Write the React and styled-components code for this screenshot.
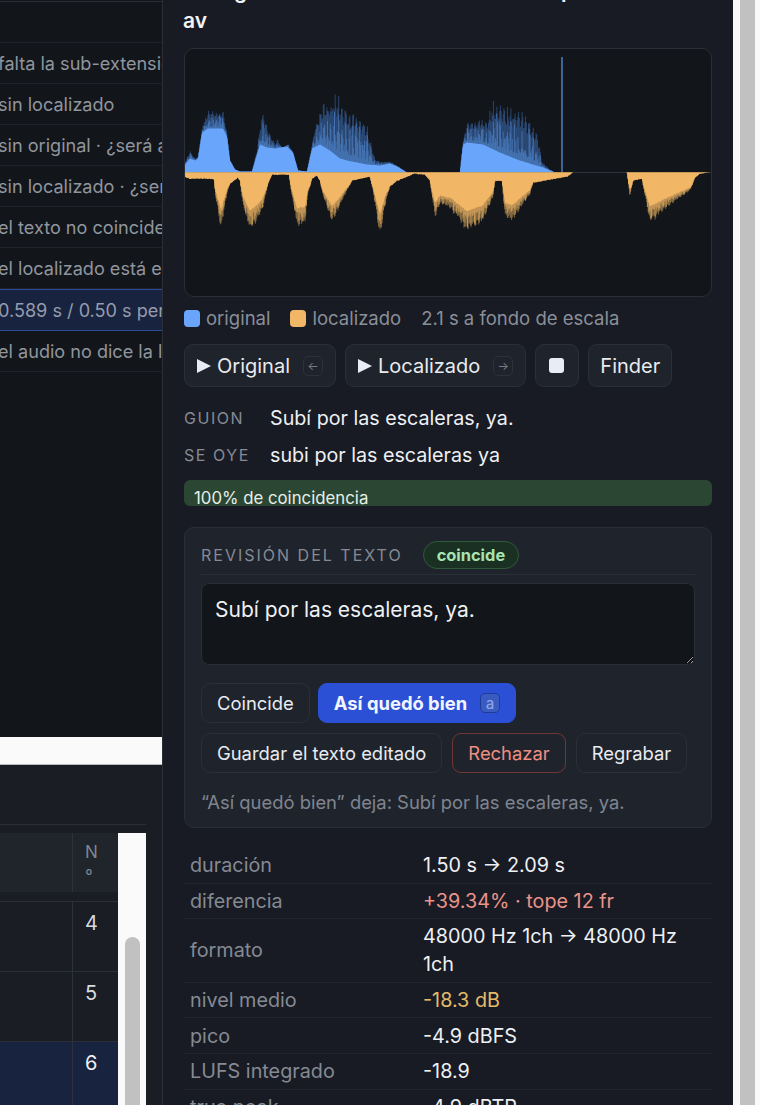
import React, { useMemo } from 'react'
import styled, { createGlobalStyle } from 'styled-components'

const Global = createGlobalStyle`
  html, body { margin: 0; padding: 0; height: 100%; overflow: hidden; background: #fafafa; }
  * { box-sizing: border-box; }
  body { font-family: Inter, "Noto Sans", sans-serif; color-scheme: dark; }
`

const Page = styled.div`
  display: flex;
  width: 760px;
  height: 1105px;
  overflow: hidden;
`
const LeftColumn = styled.div`
  width: 162px;
  flex: none;
  display: flex;
  flex-direction: column;
  overflow: hidden;
`
const TopList = styled.div`
  height: 737px;
  flex: none;
  background: #12151a;
`
const ListHead = styled.div`
  height: 42px;
  margin-top: 1px;
  border-top: 1px solid #2a2e35;
  border-bottom: 1px solid #1f2329;
`
const ListRow = styled.div`
  height: ${p => (p.$selected ? '42px' : '41px')};
  display: flex;
  align-items: center;
  white-space: nowrap;
  overflow: hidden;
  font-size: 18.1px;
  color: ${p => (p.$selected ? '#969cab' : '#90959e')};
  background: ${p => (p.$selected ? '#17233f' : 'transparent')};
  border-bottom: 1px solid ${p => (p.$selected ? '#2a4a9a' : '#1f2329')};
  border-top: ${p => (p.$selected ? '1px solid #2a4a9a' : 'none')};
  span { margin-left: -2px; }
`
const WhiteBand = styled.div`
  height: 28px;
  flex: none;
  background: #fafafa;
  border-bottom: 1px solid #b9b9b9;
`
const Lower = styled.div`
  flex: 1;
  background: #1a1d24;
  padding-top: 59px;
`
const TableRule = styled.div`
  width: 146px;
  height: 1px;
  background: #2a2e36;
  margin-bottom: 8px;
`
const TableArea = styled.div`
  display: flex;
  width: 146px;
`
const NumberTable = styled.div`
  width: 118px;
  flex: none;
`
const HeadRow = styled.div`
  height: 59px;
  margin-bottom: 9px;
  background: #20242b;
  display: flex;
  justify-content: flex-end;
`
const HeadCell = styled.div`
  width: 46px;
  border-left: 1px solid #2d3139;
  padding: 7px 0 0 12px;
  font-size: 17px;
  line-height: 24px;
  color: #7f8590;
`
const NumberRow = styled.div`
  height: 70px;
  display: flex;
  justify-content: flex-end;
  border-top: 1px solid #2a2e36;
  background: ${p => (p.$selected ? '#18233f' : 'transparent')};
`
const NumberCell = styled.div`
  width: 46px;
  border-left: 1px solid #2d3139;
  padding: 7px 0 0 12px;
  font-size: 20px;
  line-height: 28px;
  color: ${p => (p.$selected ? '#eef0f5' : '#d8dbe0')};
`
const Track = styled.div`
  width: 28px;
  height: 272px;
  flex: none;
  background: #fafafa;
  padding: 104px 6px 0 7px;
`
const Thumb = styled.div`
  height: 200px;
  background: #c1c1c1;
  border-radius: 8px 8px 0 0;
`

const Panel = styled.div`
  width: 571px;
  flex: none;
  height: 1105px;
  overflow: hidden;
  background: #181b23;
  border-left: 1px solid #2a2e36;
  padding: 0 21px;
`
const Heading = styled.h2`
  margin: -24px 0 12px -1px;
  font-size: 21px;
  line-height: 30px;
  font-weight: 600;
  color: #f1f3f7;
  white-space: nowrap;
`
const WaveBox = styled.div`
  height: 249px;
  background: #12151a;
  border: 1px solid #2b2f37;
  border-radius: 10px;
  overflow: hidden;
  svg { display: block; }
`
const Legend = styled.div`
  display: flex;
  align-items: center;
  height: 22px;
  margin-top: 10px;
  font-size: 18.5px;
  color: #8a8f99;
`
const Swatch = styled.i`
  width: 16px;
  height: 17px;
  border-radius: 4px;
  margin-right: 6px;
  background: ${p => p.$color};
`
const LegendItem = styled.span`
  margin-right: ${p => p.$gap}px;
`
const PlayRow = styled.div`
  display: flex;
  gap: 9px;
  margin-top: 15px;
`
const Btn = styled.button`
  height: ${p => (p.$small ? '40px' : '43px')};
  padding: 0 ${p => (p.$small ? '15px' : p.$tight ? '11px' : '12px')};
  display: inline-flex;
  align-items: center;
  font-family: inherit;
  font-size: ${p => (p.$small ? '18.4px' : '20px')};
  font-weight: ${p => (p.$primary ? 700 : 400)};
  color: ${p => (p.$danger ? '#ee8f84' : p.$primary ? '#f2f5ff' : '#e8ebf0')};
  background: ${p => (p.$primary ? '#2b50d6' : p.$ghost ? 'transparent' : '#1f232b')};
  border: 1px solid ${p => (p.$danger ? '#703636' : p.$primary ? '#2b50d6' : '#2b2f37')};
  border-radius: 9px;
  svg { margin-right: 6px; }
`
const StopMark = styled.i`
  width: 15px;
  height: 15px;
  margin: 0 2px 0 1px;
  border-radius: 3px;
  background: #e8ecf5;
`
const Chip = styled.kbd`
  width: 20px;
  height: 20px;
  margin-left: ${p => p.$gap}px;
  display: inline-flex;
  align-items: center;
  justify-content: center;
  font-family: inherit;
  font-size: ${p => (p.$blue ? '15px' : '12px')};
  font-weight: ${p => (p.$blue ? 500 : 400)};
  color: ${p => (p.$blue ? '#8fa3e6' : '#777c86')};
  background: ${p => (p.$blue ? '#3a5bbf' : 'transparent')};
  border: 1px solid ${p => (p.$blue ? '#1f3b9e' : '#2d3139')};
  border-radius: 5px;
`
const ScriptRow = styled.div`
  display: flex;
  align-items: center;
  height: 28px;
  margin-top: ${p => p.$top}px;
`
const ScriptLabel = styled.span`
  width: 86px;
  font-size: 16px;
  letter-spacing: 1.55px;
  color: #858a94;
`
const ScriptText = styled.span`
  font-size: 19.7px;
  color: #eef0f4;
`
const MatchBar = styled.div`
  height: 26px;
  margin-top: 11px;
  padding: 8px 10px 0;
  border-radius: 6px;
  overflow: hidden;
  background: #2b4734;
  font-size: 16.8px;
  line-height: 20px;
  color: #e8efe9;
`
const ReviewCard = styled.div`
  height: 301px;
  margin-top: 21px;
  padding: 13px 16px;
  background: #1f232b;
  border: 1px solid #2a2e36;
  border-radius: 10px;
`
const ReviewHead = styled.div`
  display: flex;
  align-items: center;
  padding-bottom: 5px;
  border-bottom: 1px solid #2a2e36;
`
const ReviewTitle = styled.span`
  font-size: 16px;
  letter-spacing: 2px;
  color: #858a94;
  margin-right: 20px;
`
const Pill = styled.span`
  height: 28px;
  padding: 0 13px;
  display: inline-flex;
  align-items: center;
  font-size: 16.4px;
  font-weight: 700;
  color: #a6e3b0;
  background: #1a3023;
  border: 1px solid #2e5a3a;
  border-radius: 14px;
`
const Editor = styled.textarea`
  display: block;
  width: 100%;
  height: 82px;
  margin-top: 8px;
  padding: 12px 13px;
  font-family: inherit;
  font-size: 21px;
  line-height: 28px;
  color: #eef0f4;
  background: #12151a;
  border: 1px solid #2a2e36;
  border-radius: 8px;
  outline: none;
`
const ActionRow = styled.div`
  display: flex;
  gap: ${p => p.$gap}px;
  margin-top: ${p => p.$top}px;
`
const Note = styled.div`
  margin-top: 16px;
  font-size: 18.4px;
  line-height: 26px;
  color: #7f8590;
`
const MetaTable = styled.table`
  width: 100%;
  margin-top: 20px;
  border-collapse: collapse;
  font-size: 19.8px;
  line-height: 28px;
  td {
    padding: 3.3px 0;
    border-bottom: 1px solid #20242b;
  }
`
const MetaLabel = styled.td`
  width: 239px;
  padding-left: 6px !important;
  color: #858a94;
`
const MetaValue = styled.td`
  padding-right: 6px !important;
  color: ${p => p.$color || '#eef0f4'};
`
const Gutter = styled.div`
  flex: 1;
  display: flex;
  background: #fafafa;
  padding: 0 5px 0 7px;
`
const PageBar = styled.div`
  width: 15px;
  background: #c1c1c1;
`

const bluePeak = [[184,8],[185,10],[190,22],[195,14],[198,16],[203,49],[208,62],[223,62],[227,39],[230,12],[235,3],[240,1],[252,1],[257,22],[262,61],[265,55],[270,39],[275,29],[278,34],[282,24],[288,29],[293,20],[298,2],[307,1],[312,26],[315,49],[323,72],[337,82],[343,67],[353,62],[365,56],[370,36],[375,14],[380,11],[390,11],[397,7],[407,0],[460,0],[463,30],[467,50],[480,54],[487,52],[493,74],[500,69],[510,65],[520,65],[530,52],[537,42],[542,11],[550,3],[555,0],[711,0]]
const blueCore = [[184,6],[185,8],[190,14],[195,12],[198,14],[202,40],[208,44],[223,44],[227,36],[230,12],[235,3],[240,1],[252,1],[257,18],[260,28],[267,25],[275,24],[287,26],[293,20],[298,2],[307,1],[312,24],[320,28],[330,22],[340,14],[347,12],[367,8],[380,7],[390,9],[397,6],[407,0],[460,0],[461,10],[463,28],[467,30],[483,28],[500,20],[517,13],[533,8],[543,5],[555,0],[711,0]]
const orangePeak = [[184,4],[190,6],[200,6],[214,6],[215,20],[221,58],[227,21],[230,11],[238,5],[240,8],[243,34],[250,60],[258,48],[263,36],[268,11],[272,2],[289,2],[292,24],[297,55],[305,53],[308,21],[312,6],[317,3],[320,8],[323,24],[332,51],[337,41],[347,18],[352,8],[370,4],[373,18],[380,66],[385,34],[390,14],[397,8],[410,3],[413,1],[425,2],[430,8],[435,46],[440,32],[450,36],[467,60],[483,50],[493,25],[495,8],[502,8],[505,45],[512,50],[530,22],[533,10],[567,4],[573,0],[627,0],[630,23],[633,8],[642,6],[650,52],[667,36],[690,18],[695,5],[700,1],[711,0]]

const MID = 172.5

function interp(points, x) {
  for (let i = 1; i < points.length; i++) {
    if (x <= points[i][0]) {
      const [x0, y0] = points[i - 1]
      const [x1, y1] = points[i]
      return y0 + ((y1 - y0) * (x - x0)) / (x1 - x0)
    }
  }
  return 0
}

function orangeCore(peak) {
  return peak <= 12 ? peak : 12 + (peak - 12) * 0.55
}

function buildWave() {
  let seed = 41
  const rand = () => {
    seed = (seed * 16807) % 2147483647
    return seed / 2147483647
  }
  const paths = { blueHaze: '', blueMid: '', orangeHaze: '', orangeMid: '', blueSolid: `M184 ${MID}`, orangeSolid: `M184 ${MID}` }
  for (let x = 184; x <= 711; x += 0.7) {
    const px = x.toFixed(1)
    const comb = Math.pow(0.5 + 0.5 * Math.cos((x * 2 * Math.PI) / 3.6), 0.6)

    const bp = interp(bluePeak, x)
    const bc = interp(blueCore, x)
    if (bp > 0.5) {
      const top = bc + (bp - bc) * (0.6 + 0.4 * comb * Math.sqrt(rand()))
      const mid = bc + (bp - bc) * (0.1 + 0.7 * comb * rand())
      paths.blueHaze += `M${px} ${MID}V${(MID - top).toFixed(1)}`
      paths.blueMid += `M${px} ${MID}V${(MID - mid).toFixed(1)}`
    }
    paths.blueSolid += `L${px} ${(MID - bc).toFixed(1)}`

    const op = interp(orangePeak, x)
    const oc = orangeCore(op)
    if (op > 0.5) {
      const top = oc + (op - oc) * (0.6 + 0.4 * comb * Math.sqrt(rand()))
      const mid = oc + (op - oc) * (0.2 + 0.7 * comb * rand())
      paths.orangeHaze += `M${px} ${MID}V${(MID + top).toFixed(1)}`
      paths.orangeMid += `M${px} ${MID}V${(MID + mid).toFixed(1)}`
    }
    const jag = oc > 1 ? (rand() - 0.5) * 1.4 : 0
    paths.orangeSolid += `L${px} ${(MID + oc + jag).toFixed(1)}`
  }
  paths.blueSolid += `L711 ${MID}Z`
  paths.orangeSolid += `L711 ${MID}Z`
  return paths
}

function Waveform() {
  const w = useMemo(buildWave, [])
  return (
    <svg width="526" height="247" viewBox="185 49 526 247">
      <line x1="184" x2="711" y1={MID} y2={MID} stroke="#2e3239" strokeWidth="1" />
      <path d={w.blueHaze} stroke="#345a92" strokeWidth="0.7" fill="none" />
      <path d={w.blueMid} stroke="#4d7fc4" strokeWidth="0.7" fill="none" />
      <path d={w.blueSolid} fill="#69a5fb" />
      <path d={w.orangeHaze} stroke="#a9854e" strokeWidth="0.7" fill="none" />
      <path d={w.orangeMid} stroke="#d9a55e" strokeWidth="0.7" fill="none" />
      <path d={w.orangeSolid} fill="#f2b766" />
      <line x1="562" x2="562" y1="57" y2="172" stroke="#3d6497" strokeWidth="2" />
    </svg>
  )
}

function PlayIcon() {
  return (
    <svg width="14" height="14" viewBox="0 0 14 14">
      <path d="M0 0 L14 7 L0 14 Z" fill="#e8ecf5" />
    </svg>
  )
}

const listRows = [
  'falta la sub-extensión del archivo',
  'sin localizado',
  'sin original · ¿será alternativo?',
  'sin localizado · ¿será alternativo?',
  'el texto no coincide con el guion',
  'el localizado está en otra carpeta',
  '0.589 s / 0.50 s permitidos',
  'el audio no dice la línea',
]

const metaRows = [
  ['duración', '1.50 s → 2.09 s'],
  ['diferencia', '+39.34% · tope 12 fr', '#ea9389'],
  ['formato', '48000 Hz 1ch → 48000 Hz 1ch'],
  ['nivel medio', '-18.3 dB', '#e3bb6a'],
  ['pico', '-4.9 dBFS'],
  ['LUFS integrado', '-18.9'],
  ['true peak', '-4.9 dBTP'],
]

export default function App() {
  return (
    <Page>
      <Global />
      <LeftColumn>
        <TopList>
          <ListHead />
          {listRows.map((text, i) => (
            <ListRow key={text} $selected={i === 6}>
              <span>{text}</span>
            </ListRow>
          ))}
        </TopList>
        <WhiteBand />
        <Lower>
          <TableRule />
          <TableArea>
            <NumberTable>
              <HeadRow>
                <HeadCell>N<br />°</HeadCell>
              </HeadRow>
              {[4, 5, 6].map(n => (
                <NumberRow key={n} $selected={n === 6}>
                  <NumberCell $selected={n === 6}>{n}</NumberCell>
                </NumberRow>
              ))}
            </NumberTable>
            <Track>
              <Thumb />
            </Track>
          </TableArea>
        </Lower>
      </LeftColumn>

      <Panel>
        <Heading>
          Diálogo-06-subida-a-la-torre-01145-p1-localizado.w
          <br />
          av
        </Heading>
        <WaveBox>
          <Waveform />
        </WaveBox>
        <Legend>
          <Swatch $color="#69a5fb" />
          <LegendItem $gap={20}>original</LegendItem>
          <Swatch $color="#f2b766" />
          <LegendItem $gap={20}>localizado</LegendItem>
          <LegendItem $gap={0}>2.1 s a fondo de escala</LegendItem>
        </Legend>
        <PlayRow>
          <Btn>
            <PlayIcon />
            Original
            <Chip $gap={13}>←</Chip>
          </Btn>
          <Btn>
            <PlayIcon />
            Localizado
            <Chip $gap={13}>→</Chip>
          </Btn>
          <Btn>
            <StopMark />
          </Btn>
          <Btn $tight>Finder</Btn>
        </PlayRow>
        <ScriptRow $top={17}>
          <ScriptLabel>GUION</ScriptLabel>
          <ScriptText>Subí por las escaleras, ya.</ScriptText>
        </ScriptRow>
        <ScriptRow $top={9}>
          <ScriptLabel>SE OYE</ScriptLabel>
          <ScriptText>subi por las escaleras ya</ScriptText>
        </ScriptRow>
        <MatchBar>100% de coincidencia</MatchBar>
        <ReviewCard>
          <ReviewHead>
            <ReviewTitle>REVISIÓN DEL TEXTO</ReviewTitle>
            <Pill>coincide</Pill>
          </ReviewHead>
          <Editor readOnly defaultValue="Subí por las escaleras, ya." />
          <ActionRow $top={18} $gap={8}>
            <Btn $small $ghost>Coincide</Btn>
            <Btn $small $primary>
              Así quedó bien
              <Chip $gap={13} $blue>a</Chip>
            </Btn>
          </ActionRow>
          <ActionRow $top={10} $gap={10}>
            <Btn $small $ghost>Guardar el texto editado</Btn>
            <Btn $small $ghost $danger>Rechazar</Btn>
            <Btn $small $ghost>Regrabar</Btn>
          </ActionRow>
          <Note>“Así quedó bien” deja: Subí por las escaleras, ya.</Note>
        </ReviewCard>
        <MetaTable>
          <tbody>
            {metaRows.map(([label, value, color]) => (
              <tr key={label}>
                <MetaLabel>{label}</MetaLabel>
                <MetaValue $color={color}>{value}</MetaValue>
              </tr>
            ))}
          </tbody>
        </MetaTable>
      </Panel>

      <Gutter>
        <PageBar />
      </Gutter>
    </Page>
  )
}
